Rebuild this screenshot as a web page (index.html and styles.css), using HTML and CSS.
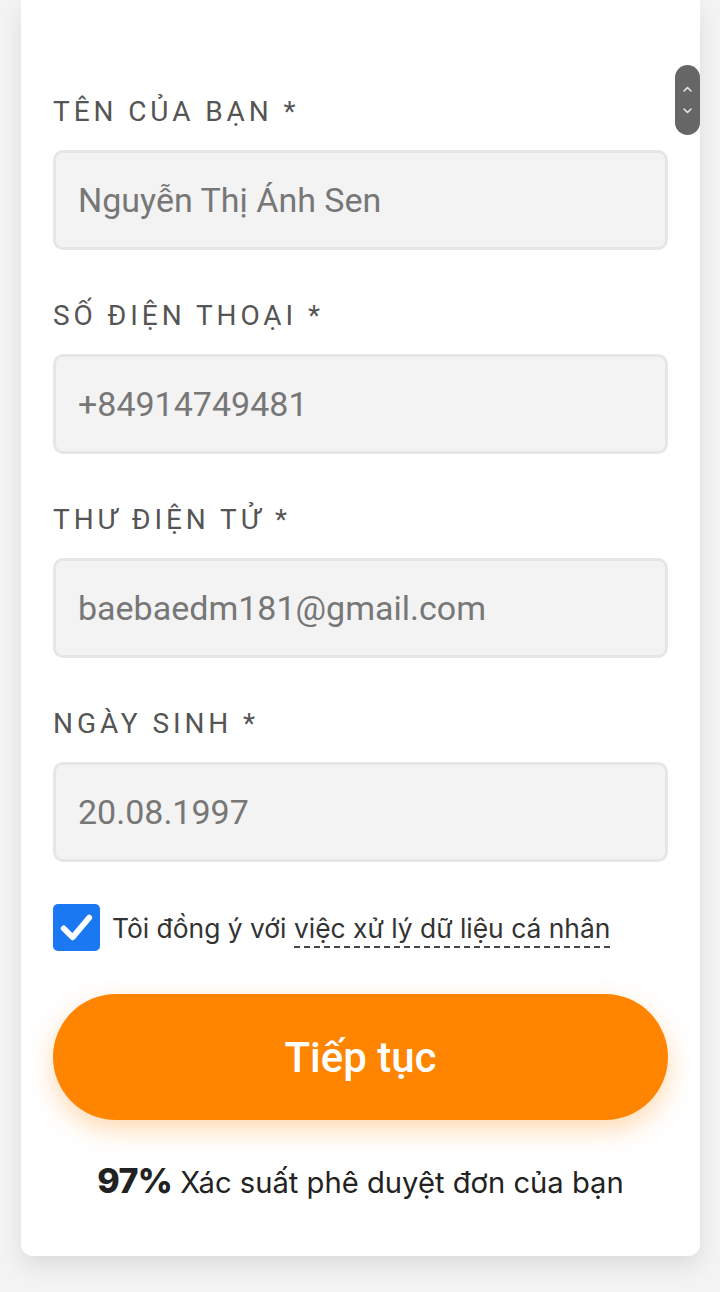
FILE: index.html
```html
<!DOCTYPE html>
<html lang="vi">
<head>
<meta charset="utf-8">
<title>Form</title>
<link rel="stylesheet" href="styles.css">
</head>
<body>
<div class="page">
  <div class="card">
    <div class="field">
      <label class="label">Tên của bạn *</label>
      <div class="input">Nguyễn Thị Ánh Sen</div>
    </div>
    <div class="field">
      <label class="label">Số điện thoại *</label>
      <div class="input">+84914749481</div>
    </div>
    <div class="field">
      <label class="label">Thư điện tử *</label>
      <div class="input">baebaedm181@gmail.com</div>
    </div>
    <div class="field">
      <label class="label">Ngày sinh *</label>
      <div class="input">20.08.1997</div>
    </div>
    <div class="agree">
      <span class="check">
        <svg viewBox="0 0 48 48" width="47" height="47"><path d="M11 25 L20 34 L37 14" fill="none" stroke="#fff" stroke-width="6" stroke-linecap="round" stroke-linejoin="round"/></svg>
      </span>
      <span class="agree-text">Tôi đồng ý với <span class="link">việc xử lý dữ liệu cá nhân</span></span>
    </div>
    <button class="btn">Tiếp tục</button>
    <p class="prob"><b>97%</b> Xác suất phê duyệt đơn của bạn</p>
  </div>
  <div class="scroll-thumb">
    <svg viewBox="0 0 25 70" width="25" height="70"><path d="M9 26 L12.5 22.5 L16 26" fill="none" stroke="#e6e6e6" stroke-width="1.6" stroke-linecap="round" stroke-linejoin="round"/><path d="M9 44 L12.5 47.5 L16 44" fill="none" stroke="#e6e6e6" stroke-width="1.6" stroke-linecap="round" stroke-linejoin="round"/></svg>
  </div>
</div>
</body>
</html>
```

FILE: styles.css
```css
* { box-sizing: border-box; }
html, body { margin: 0; padding: 0; }
body {
  background: #f3f3f3;
  font-family: Roboto, "Noto Sans", sans-serif;
  width: 720px;
  height: 1292px;
  overflow: hidden;
}
.page {
  position: relative;
  padding: 0 20px 0 21px;
}
.card {
  background: #fff;
  border-radius: 0 0 12px 12px;
  box-shadow: 0 10px 22px rgba(0,0,0,0.09);
  padding: 96px 32px 55px 32px;
  display: flex;
  flex-direction: column;
}
.field {
  display: flex;
  flex-direction: column;
  margin-bottom: 50px;
}
.field:nth-child(4) { margin-bottom: 0; }
.label {
  font-size: 28px;
  line-height: 32px;
  letter-spacing: 0.14em;
  text-transform: uppercase;
  color: #555;
  margin-bottom: 22px;
}
.input {
  height: 100px;
  background: #f3f3f3;
  border: 3px solid #e6e6e6;
  border-radius: 10px;
  padding: 0 22px;
  display: flex;
  align-items: center;
  font-size: 34px;
  color: #777;
}
.agree {
  display: flex;
  align-items: center;
  margin-top: 42px;
  gap: 12px;
}
.check {
  width: 47px;
  height: 47px;
  background: #1a78f2;
  border-radius: 5px;
  display: flex;
  flex-shrink: 0;
}
.agree-text {
  font-family: Inter, "Noto Sans", sans-serif;
  font-size: 26.4px;
  color: #333;
  line-height: 36px;
}
.link {
  border-bottom: 2px dashed #444;
  padding-bottom: 2px;
}
.btn {
  margin-top: 43px;
  height: 126px;
  border: none;
  border-radius: 63px;
  background: #ff8400;
  color: #fff;
  font-family: Roboto, sans-serif;
  font-weight: 500;
  font-size: 42px;
  box-shadow: 0 10px 26px rgba(255,132,0,0.30);
}
.prob {
  margin: 43px 0 0 0;
  text-align: center;
  font-family: Inter, "Noto Sans", sans-serif;
  font-size: 29.2px;
  line-height: 36px;
  color: #222;
}
.prob b {
  font-weight: 800;
  font-size: 34px;
  letter-spacing: -0.02em;
}
.scroll-thumb {
  position: absolute;
  left: 675px;
  top: 65px;
  width: 25px;
  height: 70px;
  background: #666;
  border-radius: 13px;
}
.scroll-thumb svg { display: block; }
```
